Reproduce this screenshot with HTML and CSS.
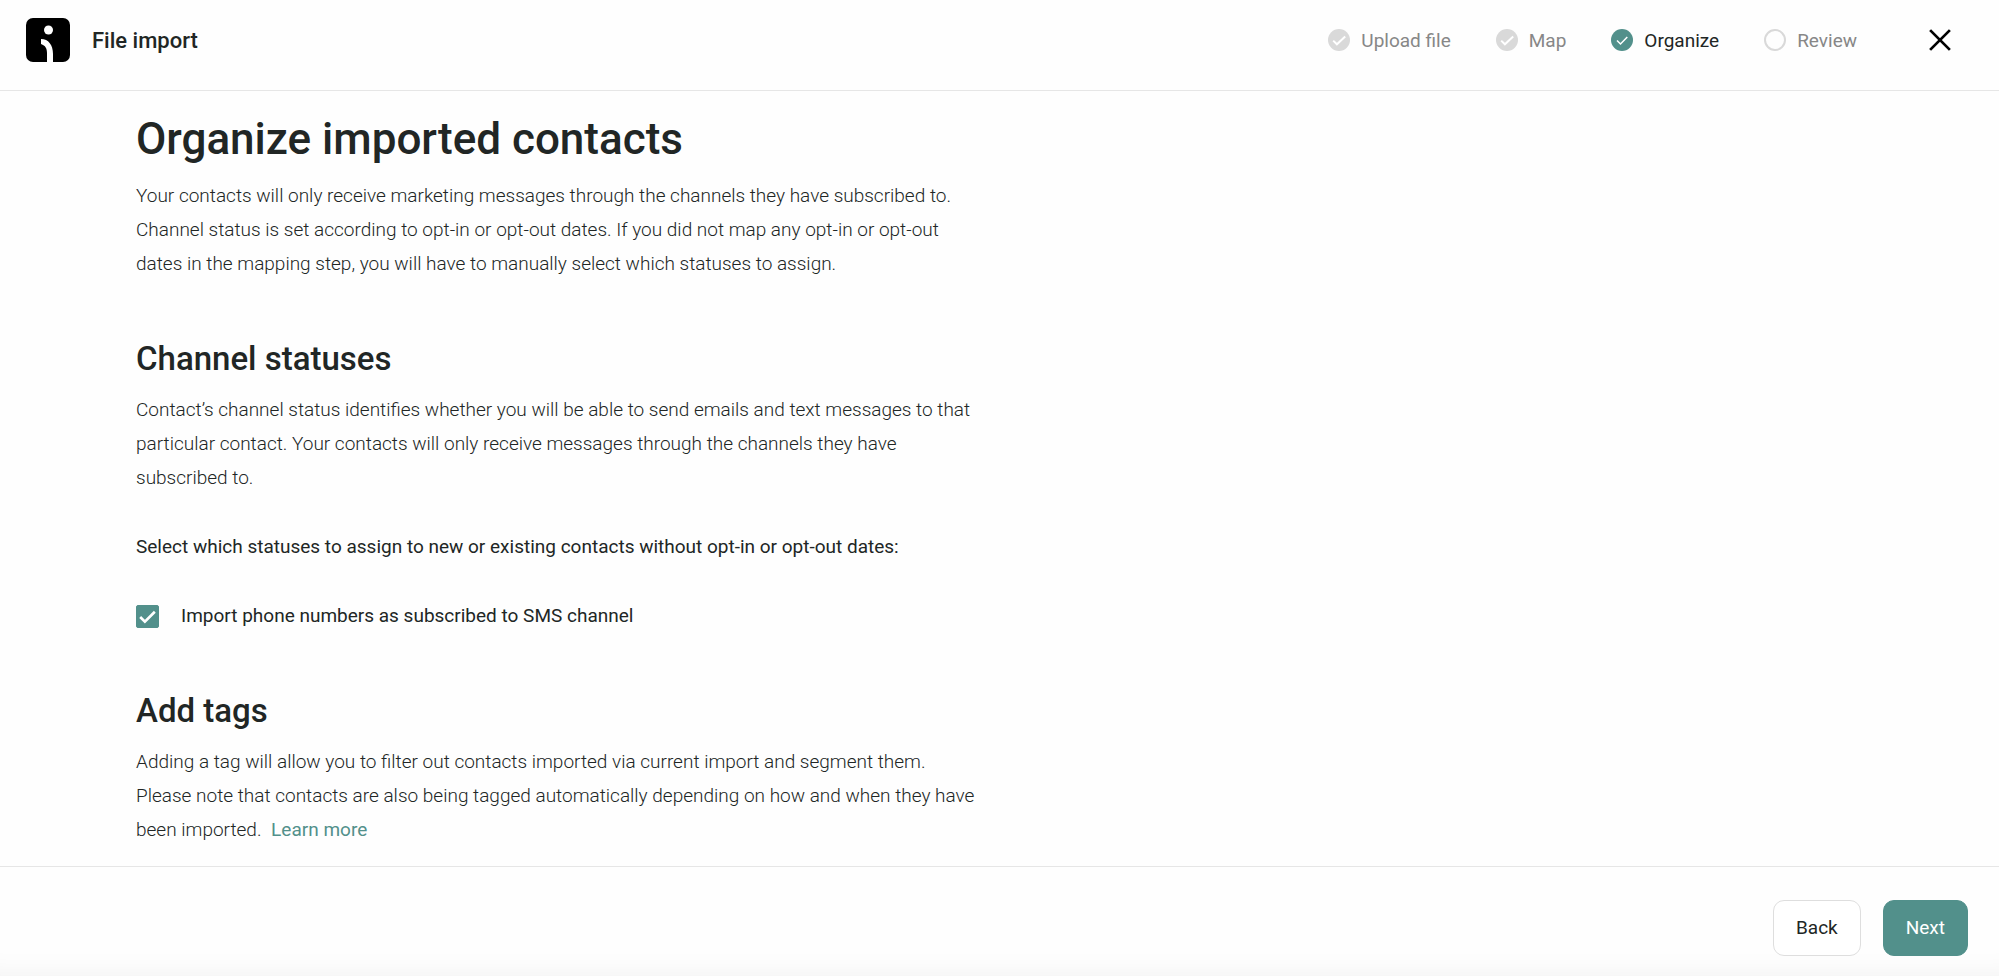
FILE: index.html
```
<!DOCTYPE html>
<html lang="en">
    <head>
        <meta charset="UTF-8">
        <title>File import</title>
        <meta name="viewport" content="width=device-width, initial-scale=1">
        <link rel="stylesheet" href="styles.css">
    </head>
    <body>
        <div id="wrap">
            <header class="top">
                <svg class="logo" viewBox="0 0 44 44" aria-hidden="true">
                    <rect width="44" height="44" rx="7"/>
                    <circle cx="22.500" cy="12" r="4.500" fill="#fff"/>
                    <path d="M15 21c7.500 0 12 6 12 15v8h-6v-9c0-4.500-1.500-7.500-6-9z" fill="#fff"/>
                </svg>
                <p class="title">File import</p>
                <ol class="steps">
                    <li class="done">
                        <svg viewBox="0 0 22 22" aria-hidden="true"><circle cx="11" cy="11" r="11"/><path d="M5.200 11.600l3.700 3.700 8.300-7.800" stroke-width="2"/></svg>
                        <span>Upload file</span>
                    </li>
                    <li class="done">
                        <svg viewBox="0 0 22 22" aria-hidden="true"><circle cx="11" cy="11" r="11"/><path d="M5.200 11.600l3.700 3.700 8.300-7.800" stroke-width="2"/></svg>
                        <span>Map</span>
                    </li>
                    <li class="active">
                        <svg viewBox="0 0 22 22" aria-hidden="true"><circle cx="11" cy="11" r="11"/><path d="M6 11.500l3.500 3.500 6.800-7" stroke-width="1.500"/></svg>
                        <span>Organize</span>
                    </li>
                    <li class="next">
                        <svg viewBox="0 0 22 22" aria-hidden="true"><circle cx="11" cy="11" r="10"/></svg>
                        <span>Review</span>
                    </li>
                </ol>
                <button type="button" class="close" aria-label="Close">
                    <svg viewBox="0 0 20 20" aria-hidden="true"><path d="M1 1l18 18M19 1l-18 18"/></svg>
                </button>
            </header>

            <main class="content">
                <section>
                    <h1>Organize imported contacts</h1>
                    <p>Your contacts will only receive marketing messages through the channels they have subscribed to. Channel status is set according to opt-in or opt-out dates. If you did not map any opt-in or opt-out dates in the mapping step, you will have to manually select which statuses to assign.</p>
                </section>
                <section>
                    <h2>Channel statuses</h2>
                    <p>Contact’s channel status identifies whether you will be able to send emails and text messages to that particular contact. Your contacts will only receive messages through the channels they have subscribed to.</p>
                    <p class="question">Select which statuses to assign to new or existing contacts without opt-in or opt-out dates:</p>
                    <label class="check">
                        <input type="checkbox" name="sms" checked>
                        <svg viewBox="0 0 22 22" aria-hidden="true"><path d="M4 11.500l4.500 4.500 9.500-9.500"/></svg>
                        <span>Import phone numbers as subscribed to SMS channel</span>
                    </label>
                </section>
                <section>
                    <h2>Add tags</h2>
                    <p>Adding a tag will allow you to filter out contacts imported via current import and segment them. Please note that contacts are also being tagged automatically depending on how and when they have been imported. <a href="#">Learn more</a></p>
                </section>
            </main>

            <footer class="bottom">
                <button type="button" class="back">Back</button>
                <button type="button" class="primary">Next</button>
            </footer>
        </div>
    </body>
</html>
```
FILE: styles.css
```
*{box-sizing: border-box;}
body,p,h1,h2{margin: 0;}
ol,li{margin: 0;padding: 0;list-style: none;}
body{
    font-family: Roboto,"Liberation Sans",sans-serif;
    font-size: 19px;
    color: #212625;
    background: #fefefe;
}
button{
    font: inherit;
    color: inherit;
    cursor: pointer;
}
svg{display: block;flex: none;}

#wrap{
    display: flex;
    flex-direction: column;
    height: 100vh;
}

/* header */
.top{
    flex: none;
    display: flex;
    align-items: center;
    height: 91px;
    padding: 0 48px 10px 26px;
    border-bottom: 1px solid #e6e6e6;
}
.logo{
    width: 44px;
    height: 44px;
}
.title{
    margin-left: 22px;
    font-size: 22px;
    font-weight: 500;
}
.steps{
    display: flex;
    gap: 45px;
    margin-left: auto;
}
.steps li{
    display: flex;
    align-items: center;
    gap: 11px;
    color: #878787;
}
.steps svg{
    width: 22px;
    height: 22px;
    fill: #d9d9d9;
}
.steps path{
    fill: none;
    stroke: #fff;
}
.steps .active{color: #212625;}
.steps .active svg{fill: #52908b;}
.steps .next circle{
    fill: none;
    stroke: #d9d9d9;
    stroke-width: 2;
}
.close{
    margin-left: 72px;
    padding: 0;
    border: none;
    background: none;
}
.close svg{
    width: 22px;
    height: 22px;
    fill: none;
    stroke: #000;
    stroke-width: 2.500;
}

/* content */
.content{
    flex: 1;
    min-height: 0;
    overflow: hidden;
    padding: 20px 136px 0;
}
.content section{
    max-width: 844px;
    margin-bottom: 56px;
}
.content p{
    line-height: 34px;
    font-weight: 300;
}
h1{
    margin-bottom: 12px;
    font-size: 44px;
    line-height: 56px;
    font-weight: 500;
}
h2{
    margin-bottom: 12px;
    font-size: 33px;
    line-height: 44px;
    font-weight: 500;
}
.content .question{
    margin: 35px 0;
    font-weight: 400;
}
.check{
    position: relative;
    display: flex;
    align-items: center;
    gap: 22px;
    line-height: 34px;
    cursor: pointer;
}
.check input{
    appearance: none;
    width: 23px;
    height: 23px;
    margin: 0;
    border: 1px solid #52908b;
    border-radius: 2px;
}
.check input:checked{background: #52908b;}
.check svg{
    position: absolute;
    left: 0;
    width: 23px;
    height: 23px;
    fill: none;
    stroke: #fff;
    stroke-width: 2.500;
}
.content a{
    margin-left: 5px;
    color: #52908b;
    font-weight: 400;
    text-decoration: none;
}

/* footer */
.bottom{
    flex: none;
    display: flex;
    justify-content: flex-end;
    align-items: center;
    gap: 22px;
    height: 110px;
    padding: 12px 31px 0;
    border-top: 1px solid #e6e6e6;
    box-shadow: inset 0 -30px 30px -30px rgba(0,0,0,.06);
}
.bottom button{
    height: 56px;
    padding: 0 22px;
    border: 1px solid #dedede;
    border-radius: 11px;
    background: #fff;
}
.bottom .primary{
    color: #fff;
    background: #52908b;
    border-color: #52908b;
}
```
